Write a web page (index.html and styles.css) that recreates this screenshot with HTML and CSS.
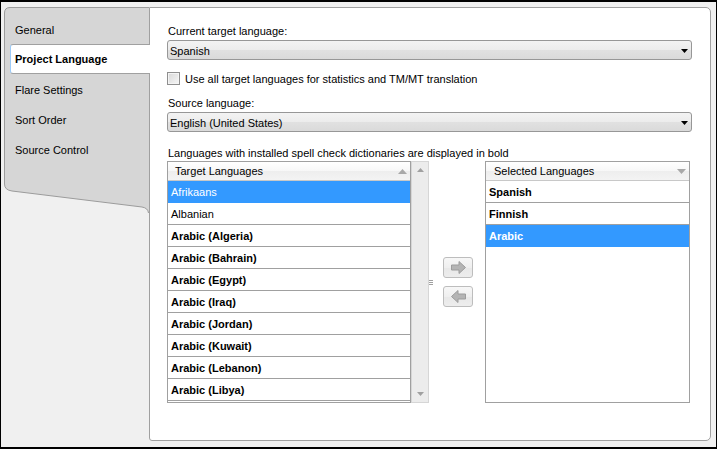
FILE: index.html
```html
<!DOCTYPE html>
<html>
<head>
<meta charset="utf-8">
<link rel="stylesheet" href="styles.css">
</head>
<body>
<div class="window">
  <nav class="sidebar">
    <div class="tab">General</div>
    <div class="tab active">Project Language</div>
    <div class="tab">Flare Settings</div>
    <div class="tab">Sort Order</div>
    <div class="tab">Source Control</div>
  </nav>
  <main class="panel">
    <div class="label">Current target language:</div>
    <div class="select"><span>Spanish</span><svg class="caret" width="7" height="4" viewBox="0 0 7 4"><path d="M0 0H7L3.5 4Z" fill="#000"/></svg></div>
    <div class="check"><span class="box"></span><span>Use all target languages for statistics and TM/MT translation</span></div>
    <div class="label label2">Source language:</div>
    <div class="select"><span>English (United States)</span><svg class="caret" width="7" height="4" viewBox="0 0 7 4"><path d="M0 0H7L3.5 4Z" fill="#000"/></svg></div>
    <div class="label note">Languages with installed spell check dictionaries are displayed in bold</div>
    <div class="lists">
      <div class="target">
        <div class="list target-list">
          <div class="list-head head-target"><span>Target Languages</span><svg class="sort" width="9" height="5" viewBox="0 0 9 5"><path d="M0 5H9L4.5 0Z" fill="#a8a8a8"/></svg></div>
          <div class="row sel">Afrikaans</div>
          <div class="row">Albanian</div>
          <div class="row b">Arabic (Algeria)</div>
          <div class="row b">Arabic (Bahrain)</div>
          <div class="row b">Arabic (Egypt)</div>
          <div class="row b">Arabic (Iraq)</div>
          <div class="row b">Arabic (Jordan)</div>
          <div class="row b">Arabic (Kuwait)</div>
          <div class="row b">Arabic (Lebanon)</div>
          <div class="row b">Arabic (Libya)</div>
        </div>
        <div class="scrollbar">
          <svg width="7" height="4" viewBox="0 0 7 4"><path d="M0 4H7L3.5 0Z" fill="#a0a0a0"/></svg>
          <svg width="7" height="4" viewBox="0 0 7 4"><path d="M0 0H7L3.5 4Z" fill="#a0a0a0"/></svg>
        </div>
      </div>
      <div class="mid">
        <div class="grip"></div>
        <div class="buttons">
          <div class="btn"><svg width="15" height="13" viewBox="0 0 15 13"><path d="M0.5 4H8V0.5L14.5 6.5L8 12.5V9H0.5Z" fill="#b4b4b4" stroke="#9c9c9c" stroke-width="1"/></svg></div>
          <div class="btn"><svg width="15" height="13" viewBox="0 0 15 13"><path d="M14.5 4H7V0.5L0.5 6.5L7 12.5V9H14.5Z" fill="#b4b4b4" stroke="#9c9c9c" stroke-width="1"/></svg></div>
        </div>
      </div>
      <div class="list selected-list">
        <div class="list-head head-selected"><span>Selected Languages</span><svg class="sort" width="9" height="5" viewBox="0 0 9 5"><path d="M0 0H9L4.5 5Z" fill="#a8a8a8"/></svg></div>
        <div class="row b">Spanish</div>
        <div class="row b">Finnish</div>
        <div class="row b sel">Arabic</div>
      </div>
    </div>
  </main>
</div>
</body>
</html>
```

FILE: styles.css
```css
html, body {
  margin: 0;
  padding: 0;
}
body {
  font-family: "Liberation Sans", Arial, sans-serif;
  font-size: 11px;
  color: #000;
}
.window {
  width: 717px;
  height: 449px;
  box-sizing: border-box;
  border-style: solid;
  border-color: #000;
  border-width: 2px 1px 2px 1px;
  padding: 5px 5px 6px 3px;
  background: #f0f0f0;
  display: flex;
  align-items: flex-start;
}
.sidebar {
  flex: none;
  width: 145px;
  height: 206px;
  box-sizing: border-box;
  padding-top: 7px;
  display: flex;
  flex-direction: column;
  background-image: url("data:image/svg+xml,%3Csvg xmlns='http://www.w3.org/2000/svg' width='145' height='206'%3E%3Cpath d='M145 0.5H6Q0.5 0.5 0.5 6V177Q0.5 183 8 184L138 200Q144 201 144.5 206H145Z' fill='%23d6d6d6'/%3E%3Cpath d='M145 0.5H6Q0.5 0.5 0.5 6V177Q0.5 183 8 184L138 200Q144 201 144.5 206' fill='none' stroke='%239c9c9c'/%3E%3C/svg%3E");
  background-repeat: no-repeat;
}
.tab {
  height: 30px;
  line-height: 28px;
  padding-top: 2px;
  box-sizing: border-box;
  padding-left: 11px;
  white-space: nowrap;
}
.tab.active {
  position: relative;
  margin: 0 -1px 0 6px;
  padding-left: 4px;
  padding-top: 1px;
  line-height: 27px;
  background: #fff;
  border-top: 1px solid #a0a0a0;
  border-bottom: 1px solid #a0a0a0;
  border-left: 1px solid #9ccaf6;
  border-radius: 3px 0 0 3px;
  font-weight: bold;
}
.panel {
  flex: none;
  width: 562px;
  height: 434px;
  box-sizing: border-box;
  border: 1px solid #a0a0a0;
  border-radius: 0 5px 5px 3px;
  background: #fff;
  padding: 15px 18px 0 17px;
}
.label {
  height: 14px;
  box-sizing: border-box;
  padding-top: 1px;
  line-height: 14px;
  padding-left: 1px;
  white-space: nowrap;
}
.label2 {
  margin-top: 10px;
}
.note {
  margin-top: 13px;
}
.select {
  margin-top: 3px;
  height: 20px;
  box-sizing: border-box;
  border: 1px solid #979797;
  border-radius: 3px;
  background: linear-gradient(#f3f3f3, #ececec 50%, #e1e1e1 51%, #dadada);
  display: flex;
  align-items: center;
  justify-content: space-between;
  padding: 1px 3px 0 2px;
}
.check {
  margin-top: 11px;
  height: 14px;
  display: flex;
  align-items: center;
  white-space: nowrap;
}
.check span:last-child {
  padding-top: 1px;
}
.box {
  width: 13px;
  height: 13px;
  box-sizing: border-box;
  border: 1px solid #8f8f8f;
  background: linear-gradient(135deg, #d8d8d8, #f6f6f6);
  box-shadow: inset 0 0 0 1px #f4f4f4;
  margin-right: 5px;
  flex: none;
}
.lists {
  margin-top: 2px;
  height: 242px;
  display: flex;
}
.target {
  display: flex;
  flex: none;
}
.list {
  height: 242px;
  box-sizing: border-box;
  border: 1px solid #a0a0a0;
  background: #fff;
  overflow: hidden;
}
.target-list {
  width: 244px;
}
.selected-list {
  width: 205px;
}
.list-head {
  height: 19px;
  line-height: 17px;
  padding-top: 1px;
  box-sizing: border-box;
  border-bottom: 1px solid #c8c8c8;
  background: linear-gradient(#ffffff, #f7f7f7 50%, #eeeeee 51%, #f3f3f3);
  display: flex;
  align-items: center;
  justify-content: space-between;
  padding-right: 3px;
}
.head-target {
  padding-left: 7px;
}
.head-selected {
  padding-left: 8px;
}
.row {
  height: 22px;
  line-height: 19px;
  padding-top: 2px;
  box-sizing: border-box;
  border-bottom: 1px solid #a0a0a0;
  padding-left: 3px;
  white-space: nowrap;
}
.row.b {
  font-weight: bold;
}
.row.sel {
  background: #3399ff;
  border-bottom-color: #3399ff;
  color: #fff;
}
.scrollbar {
  width: 18px;
  height: 242px;
  box-sizing: border-box;
  border: 1px solid #d6d6d6;
  background: #ececec;
  display: flex;
  flex-direction: column;
  align-items: center;
  justify-content: space-between;
  padding: 6px 0 6px;
}
.mid {
  width: 56px;
  flex: none;
  display: flex;
  align-items: center;
}
.grip {
  width: 4px;
  height: 5px;
  background: linear-gradient(#a0a0a0 0 1px, transparent 1px 2px, #a0a0a0 2px 3px, transparent 3px 4px, #a0a0a0 4px 5px);
}
.buttons {
  margin-left: 10px;
  display: flex;
  flex-direction: column;
  gap: 8px;
}
.btn {
  width: 30px;
  height: 21px;
  box-sizing: border-box;
  border: 1px solid #bdbdbd;
  border-radius: 3px;
  background: linear-gradient(#f7f7f7, #efefef 50%, #e8e8e8 51%, #ededed);
  display: flex;
  align-items: center;
  justify-content: center;
}
```
